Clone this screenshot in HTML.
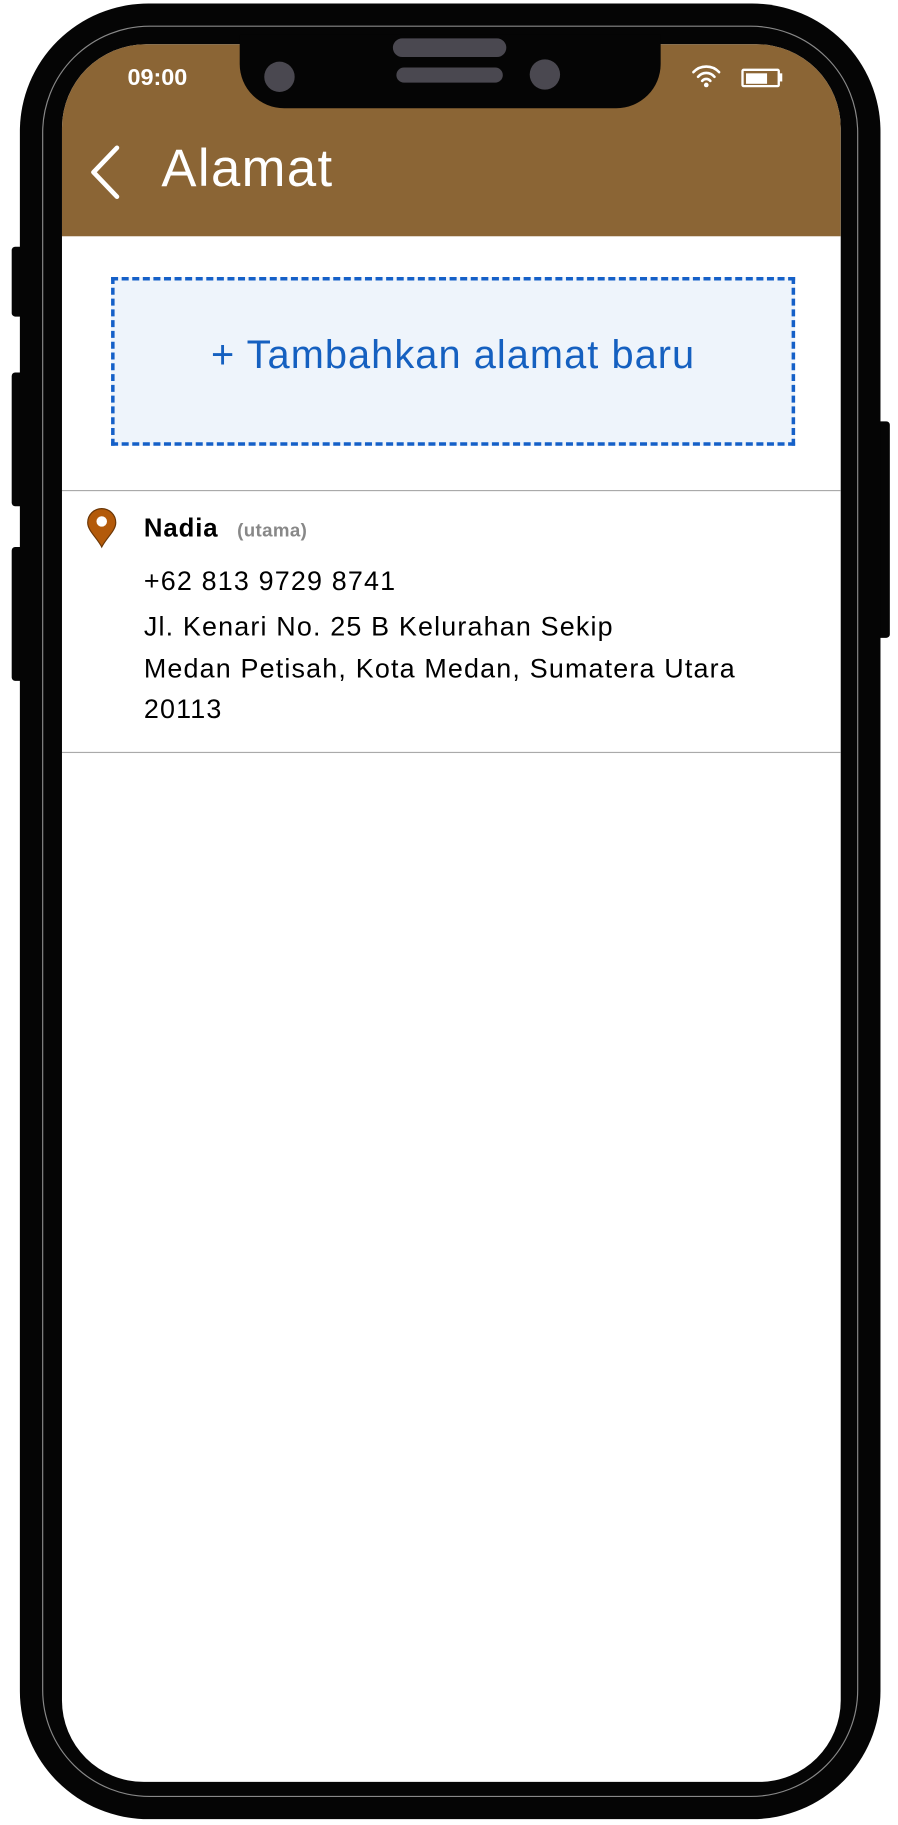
<!DOCTYPE html>
<html><head><meta charset="utf-8"><style>
html,body{margin:0;padding:0;background:#fff;width:898px;height:1825px;overflow:hidden}
#s{position:absolute;left:0;top:0;width:768px;height:1568px;transform:scale(1.1693,1.1639);transform-origin:0 0;font-family:"Liberation Sans",Arial,sans-serif}
.a{position:absolute}
</style></head><body><div id="s">
<div class="a" style="left:10px;top:212px;width:12px;height:60px;background:#050505;border-radius:3px"></div>
<div class="a" style="left:10px;top:320px;width:12px;height:115px;background:#050505;border-radius:3px"></div>
<div class="a" style="left:10px;top:470px;width:12px;height:115px;background:#050505;border-radius:3px"></div>
<div class="a" style="left:748px;top:362px;width:13px;height:186px;background:#050505;border-radius:3px"></div>
<div class="a" style="left:17px;top:3px;width:736px;height:1560px;background:#050505;border-radius:110px"></div>
<div class="a" style="left:36px;top:22px;width:696px;height:1520px;border:1px solid #888;border-radius:92px"></div>
<div class="a" style="left:53px;top:38px;width:666px;height:1493px;background:#fff;border-radius:72px 72px 70px 70px;overflow:hidden">
  <div class="a" style="left:0;top:0;width:666px;height:165px;background:#8B6535"></div>
  <div class="a" style="left:0;top:383px;width:666px;height:1px;background:#aaa"></div>
  <div class="a" style="left:0;top:608px;width:666px;height:1px;background:#aaa"></div>
</div>
<div class="a" style="left:205px;top:30px;width:360px;height:63px;background:#050505;border-radius:0 0 38px 38px"></div>
<div class="a" style="left:336px;top:33px;width:97px;height:16px;background:#4a4850;border-radius:8px"></div>
<div class="a" style="left:339px;top:58px;width:91px;height:13px;background:#4a4850;border-radius:7px"></div>
<div class="a" style="left:226px;top:53px;width:26px;height:26px;background:#4a4850;border-radius:50%"></div>
<div class="a" style="left:453px;top:51px;width:26px;height:26px;background:#4a4850;border-radius:50%"></div>
<div class="a" style="left:109px;top:56px;color:#fff;font-weight:bold;font-size:20px">09:00</div>
<svg class="a" style="left:591px;top:54px" width="26" height="22" viewBox="0 0 26 22"><g fill="none" stroke="#fff" stroke-width="2.2" stroke-linecap="round"><path d="M2 8a15 15 0 0 1 22 0"/><path d="M6 12a9 9 0 0 1 14 0"/><path d="M9.5 15.5a4.5 4.5 0 0 1 7 0"/></g><circle cx="13" cy="19" r="2" fill="#fff"/></svg>
<div class="a" style="left:634px;top:59px;width:29px;height:12px;border:2.5px solid #fff;border-radius:2px"></div>
<div class="a" style="left:638px;top:63px;width:18px;height:9px;background:#fff"></div>
<div class="a" style="left:666px;top:63px;width:3px;height:7px;background:#fff"></div>
<svg class="a" style="left:74px;top:124px" width="32" height="48" viewBox="0 0 32 48"><path d="M26 3 L6 24 L26 45" fill="none" stroke="#fff" stroke-width="4" stroke-linecap="round" stroke-linejoin="round"/></svg>
<div class="a" style="left:138px;top:119px;color:#fff;font-size:45px;letter-spacing:1.2px">Alamat</div>
<div class="a" style="left:95px;top:238px;width:579px;height:139px;background:#EEF4FB;border:3px dashed #1560C8"></div>
<div class="a" style="left:95px;top:286px;width:585px;text-align:center;color:#1560C0;font-size:34px;letter-spacing:0.9px">+ Tambahkan alamat baru</div>
<svg class="a" style="left:74px;top:436px" width="26" height="36" viewBox="0 0 26 36"><path d="M13 34 C9 26 1 20 1 13 A12 12 0 0 1 25 13 C25 20 17 26 13 34Z" fill="#B35A0A" stroke="#6a3606" stroke-width="1"/><circle cx="13" cy="12" r="4.5" fill="#fff"/></svg>
<div class="a" style="left:123px;top:441px;font-weight:bold;font-size:22px;color:#000;letter-spacing:0.8px">Nadia <span style="font-size:16px;color:#888;margin-left:9px;letter-spacing:0.3px">(utama)</span></div>
<div class="a" style="left:123px;top:482px;font-size:23px;color:#000;line-height:35.5px;letter-spacing:1px">+62 813 9729 8741</div>
<div class="a" style="left:123px;top:521px;font-size:23px;color:#000;line-height:35.5px;letter-spacing:1px">Jl. Kenari No. 25 B Kelurahan Sekip<br>Medan Petisah, Kota Medan, Sumatera Utara<br>20113</div>
</div></body></html>
